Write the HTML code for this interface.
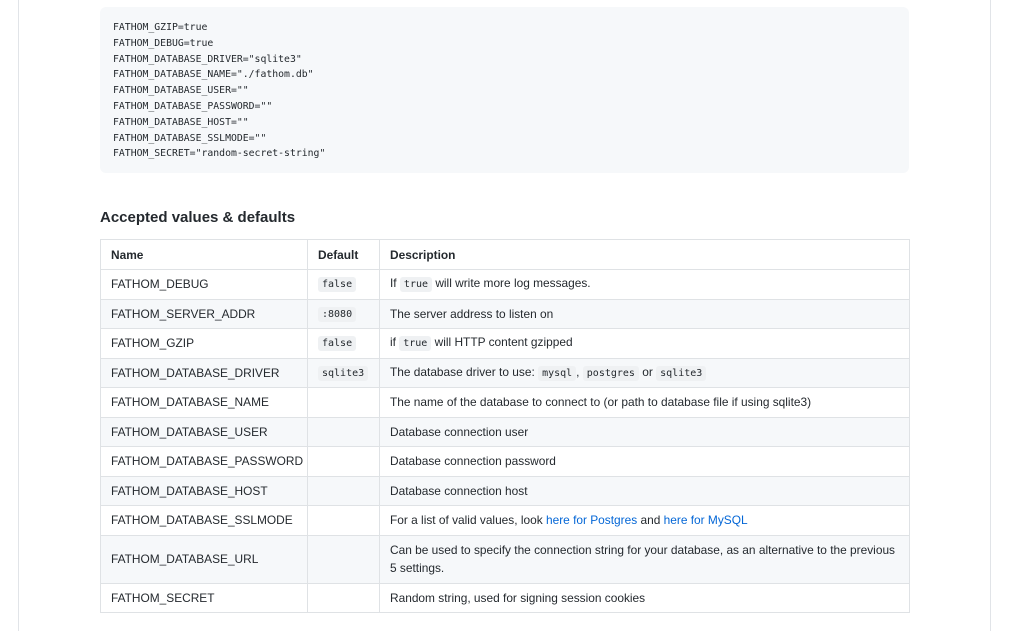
<!DOCTYPE html>
<html><head><meta charset="utf-8"><style>
html,body{margin:0;padding:0;background:#fff;width:1012px;height:631px;overflow:hidden}
body{font-family:"Liberation Sans",sans-serif;color:#24292e;position:relative}
.wrap{position:absolute;left:18px;top:-2px;width:971px;height:640px;border-left:1px solid #e1e4e8;border-right:1px solid #e1e4e8}
pre{position:absolute;left:100px;top:7px;width:783px;height:140px;margin:0;padding:13px 13px;background:#f6f8fa;border-radius:6px;font-family:"DejaVu Sans Mono","Liberation Mono",monospace;font-size:9.8px;line-height:15.8px;color:#24292e}
h3{position:absolute;left:100px;top:208px;margin:0;font-size:15px;font-weight:600;line-height:20px}
table{position:absolute;left:100px;top:239px;width:810px;border-collapse:collapse;font-size:11.9px;table-layout:fixed}
td,th{border:1px solid #dfe2e5;padding:0 10px;height:28.5px;line-height:18px;text-align:left;vertical-align:middle;white-space:nowrap;overflow:hidden}
th{font-weight:600;height:29px}
tbody tr:nth-child(2n) td{background:#f6f8fa}
tbody tr:nth-child(2n+1) td{background:#fff}
col.c1{width:207px}
col.c2{width:72px}
code{font-family:"DejaVu Sans Mono","Liberation Mono",monospace;font-size:10px;background:#eff1f3;border-radius:3px;padding:2px 4px}
a{color:#0366d6;text-decoration:none}
.two td{height:47px;white-space:normal}
</style></head><body>
<div class="wrap"></div>
<pre>FATHOM_GZIP=true
FATHOM_DEBUG=true
FATHOM_DATABASE_DRIVER="sqlite3"
FATHOM_DATABASE_NAME="./fathom.db"
FATHOM_DATABASE_USER=""
FATHOM_DATABASE_PASSWORD=""
FATHOM_DATABASE_HOST=""
FATHOM_DATABASE_SSLMODE=""
FATHOM_SECRET="random-secret-string"</pre>
<h3>Accepted values &amp; defaults</h3>
<table>
<colgroup><col class="c1"><col class="c2"><col></colgroup>
<thead><tr><th>Name</th><th>Default</th><th>Description</th></tr></thead>
<tbody>
<tr><td>FATHOM_DEBUG</td><td><code>false</code></td><td>If <code>true</code> will write more log messages.</td></tr>
<tr><td>FATHOM_SERVER_ADDR</td><td><code>:8080</code></td><td>The server address to listen on</td></tr>
<tr><td>FATHOM_GZIP</td><td><code>false</code></td><td>if <code>true</code> will HTTP content gzipped</td></tr>
<tr><td>FATHOM_DATABASE_DRIVER</td><td><code>sqlite3</code></td><td>The database driver to use: <code>mysql</code>, <code>postgres</code> or <code>sqlite3</code></td></tr>
<tr><td>FATHOM_DATABASE_NAME</td><td></td><td>The name of the database to connect to (or path to database file if using sqlite3)</td></tr>
<tr><td>FATHOM_DATABASE_USER</td><td></td><td>Database connection user</td></tr>
<tr><td>FATHOM_DATABASE_PASSWORD</td><td></td><td>Database connection password</td></tr>
<tr><td>FATHOM_DATABASE_HOST</td><td></td><td>Database connection host</td></tr>
<tr><td>FATHOM_DATABASE_SSLMODE</td><td></td><td>For a list of valid values, look <a>here for Postgres</a> and <a>here for MySQL</a></td></tr>
<tr class="two"><td>FATHOM_DATABASE_URL</td><td></td><td>Can be used to specify the connection string for your database, as an alternative to the previous 5 settings.</td></tr>
<tr><td>FATHOM_SECRET</td><td></td><td>Random string, used for signing session cookies</td></tr>
</tbody></table>
</body></html>
